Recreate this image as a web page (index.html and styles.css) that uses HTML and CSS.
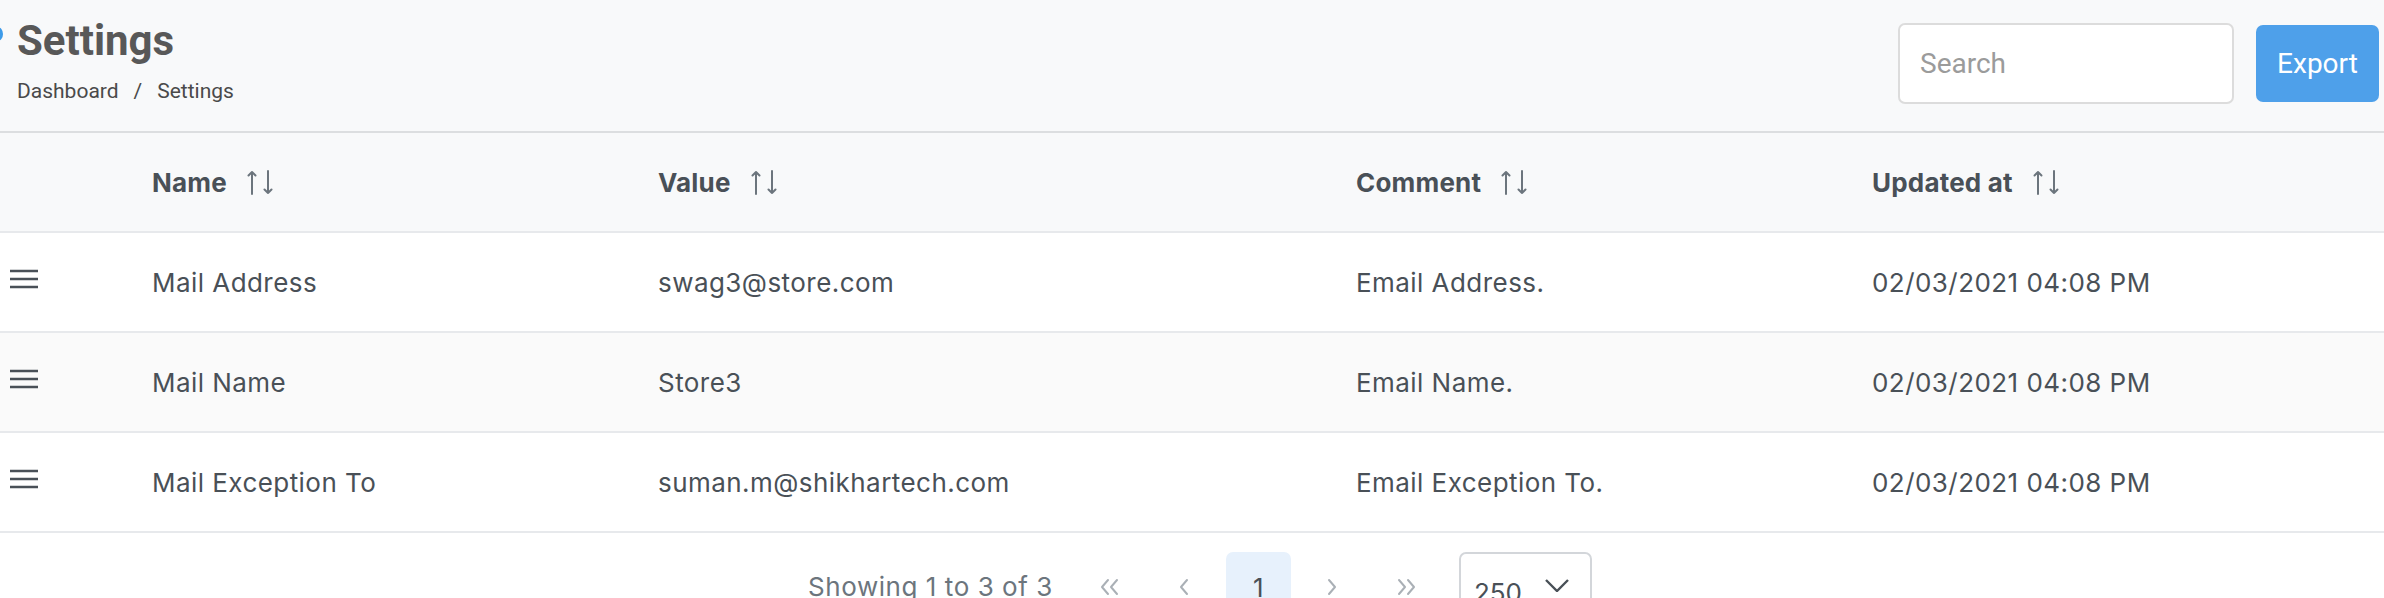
FILE: index.html
```html
<!DOCTYPE html>
<html lang="en">
<head>
<meta charset="utf-8">
<title>Settings</title>
<link rel="stylesheet" href="styles.css">
</head>
<body>
<div class="page">
  <span class="side-dot"></span>
  <header class="topbar">
    <div class="title-block">
      <h1 class="title">Settings</h1>
      <nav class="crumbs"><span>Dashboard</span><span class="sep">/</span><span>Settings</span></nav>
    </div>
    <div class="actions">
      <input class="search" type="text" placeholder="Search">
      <button class="btn-export" type="button">Export</button>
    </div>
  </header>

  <div class="table">
    <div class="row head">
      <div class="cell"></div>
      <div class="cell">Name <svg class="sort" viewBox="0 0 27 25"><path d="M5 2v22M1.5 5.5L5 2l3.5 3.5M21 1v22M17.5 19.5L21 23l3.5-3.5"/></svg></div>
      <div class="cell">Value <svg class="sort" viewBox="0 0 27 25"><path d="M5 2v22M1.5 5.5L5 2l3.5 3.5M21 1v22M17.5 19.5L21 23l3.5-3.5"/></svg></div>
      <div class="cell">Comment <svg class="sort" viewBox="0 0 27 25"><path d="M5 2v22M1.5 5.5L5 2l3.5 3.5M21 1v22M17.5 19.5L21 23l3.5-3.5"/></svg></div>
      <div class="cell">Updated at <svg class="sort" viewBox="0 0 27 25"><path d="M5 2v22M1.5 5.5L5 2l3.5 3.5M21 1v22M17.5 19.5L21 23l3.5-3.5"/></svg></div>
    </div>
    <div class="row">
      <div class="cell"><svg class="drag" viewBox="0 0 28 20"><path d="M0 2h28M0 10h28M0 18h28"/></svg></div>
      <div class="cell">Mail Address</div>
      <div class="cell">swag3@store.com</div>
      <div class="cell">Email Address.</div>
      <div class="cell">02/03/2021 04:08 PM</div>
    </div>
    <div class="row striped">
      <div class="cell"><svg class="drag" viewBox="0 0 28 20"><path d="M0 2h28M0 10h28M0 18h28"/></svg></div>
      <div class="cell">Mail Name</div>
      <div class="cell">Store3</div>
      <div class="cell">Email Name.</div>
      <div class="cell">02/03/2021 04:08 PM</div>
    </div>
    <div class="row">
      <div class="cell"><svg class="drag" viewBox="0 0 28 20"><path d="M0 2h28M0 10h28M0 18h28"/></svg></div>
      <div class="cell">Mail Exception To</div>
      <div class="cell">suman.m@shikhartech.com</div>
      <div class="cell">Email Exception To.</div>
      <div class="cell">02/03/2021 04:08 PM</div>
    </div>
  </div>

  <div class="pager">
    <span class="showing">Showing 1 to 3 of 3</span>
    <div class="pages">
      <button class="pg" type="button"><svg viewBox="0 0 22 18"><path d="M9 2L3 9l6 7M18 2l-6 7 6 7"/></svg></button>
      <button class="pg" type="button"><svg viewBox="0 0 22 18"><path d="M14 2L8 9l6 7"/></svg></button>
      <button class="pg active" type="button">1</button>
      <button class="pg" type="button"><svg viewBox="0 0 22 18"><path d="M8 2l6 7-6 7"/></svg></button>
      <button class="pg" type="button"><svg viewBox="0 0 22 18"><path d="M4 2l6 7-6 7M13 2l6 7-6 7"/></svg></button>
    </div>
    <div class="per-page"><span>250</span><svg viewBox="0 0 24 13"><path d="M1 1l11 11L23 1"/></svg></div>
  </div>
</div>
</body>
</html>
```

FILE: styles.css
```css
* { box-sizing: border-box; }

html, body {
  margin: 0;
  padding: 0;
  background: #ffffff;
}

body {
  width: 2384px;
  height: 598px;
  overflow: hidden;
  font-family: Inter, "Liberation Sans", sans-serif;
  color: #495057;
}

.page {
  position: relative;
}

.side-dot {
  position: absolute;
  left: -8px;
  top: 27px;
  width: 11px;
  height: 14px;
  border-radius: 50%;
  background: #3d9be9;
}

.topbar {
  height: 133px;
  background: #f8f9fa;
  border-bottom: 2px solid #dcdee0;
  display: flex;
  justify-content: space-between;
  align-items: flex-start;
  padding: 0 5px 0 17px;
}

.title-block {
  display: flex;
  flex-direction: column;
  padding-top: 20px;
}

.title {
  margin: 0;
  font-family: Roboto, "Liberation Sans", sans-serif;
  font-weight: 700;
  font-size: 42px;
  line-height: 42px;
  color: #585858;
}

.crumbs {
  margin-top: 19px;
  font-family: Roboto, "Liberation Sans", sans-serif;
  font-size: 21px;
  line-height: 21px;
  color: #4a4a4a;
  display: flex;
  gap: 15px;
}

.actions {
  display: flex;
  align-items: center;
  gap: 22px;
  margin-top: 23px;
}

.search {
  width: 336px;
  height: 81px;
  border: 2px solid #dcdcdc;
  border-radius: 7px;
  background: #ffffff;
  padding: 0 20px;
  font-family: Roboto, "Liberation Sans", sans-serif;
  font-size: 28px;
  color: #495057;
  outline: none;
}

.search::placeholder {
  color: #9b9b9b;
}

.btn-export {
  width: 123px;
  height: 77px;
  border: 0;
  border-radius: 7px;
  background: #4ea0ea;
  color: #ffffff;
  font-family: Roboto, "Liberation Sans", sans-serif;
  font-size: 28px;
  padding: 0;
}

.table {
  display: flex;
  flex-direction: column;
}

.row {
  display: grid;
  grid-template-columns: 152px 506px 698px 516px 1fr;
  height: 100px;
  border-bottom: 2px solid #e7e9ec;
  align-items: center;
  font-size: 26px;
  letter-spacing: 0.45px;
  color: #495057;
}

.row.head {
  background: #f8f9fa;
  font-weight: 700;
  letter-spacing: 0.2px;
}

.row.striped {
  background: #fafafa;
}

.cell {
  display: flex;
  align-items: center;
  white-space: nowrap;
}

.sort {
  width: 27px;
  height: 25px;
  margin-left: 20px;
  fill: none;
  stroke: #6c757d;
  stroke-width: 2;
  stroke-linecap: round;
  stroke-linejoin: round;
}

.drag {
  width: 28px;
  height: 20px;
  margin-left: 10px;
  margin-top: -6px;
  fill: none;
  stroke: #495057;
  stroke-width: 2.6;
}

.pager {
  display: flex;
  justify-content: center;
  align-items: flex-start;
  padding-top: 19px;
  padding-left: 16px;
  gap: 25px;
}

.showing {
  margin-top: 20px;
  font-size: 26px;
  letter-spacing: 0.55px;
  color: #6c757d;
  line-height: 30px;
  white-space: nowrap;
}

.pages {
  display: flex;
  gap: 9px;
}

.pg {
  width: 65px;
  height: 70px;
  border: 0;
  border-radius: 7px;
  background: transparent;
  display: flex;
  align-items: center;
  justify-content: center;
  padding: 0;
  font-family: Inter, "Liberation Sans", sans-serif;
  font-size: 26px;
  color: #495057;
}

.pg svg {
  width: 22px;
  height: 18px;
  fill: none;
  stroke: #aab0b6;
  stroke-width: 2;
  stroke-linecap: round;
  stroke-linejoin: round;
}

.pg.active {
  background: #e7f1fc;
}

.per-page {
  margin-left: -5px;
  width: 133px;
  height: 70px;
  border: 2px solid #d3d6da;
  border-radius: 7px;
  display: flex;
  align-items: center;
  justify-content: space-between;
  padding: 10px 21px 0 13px;
  font-size: 26px;
  color: #495057;
}

.per-page svg {
  width: 24px;
  height: 13px;
  margin-top: -14px;
  fill: none;
  stroke: #495057;
  stroke-width: 2.4;
}
```
